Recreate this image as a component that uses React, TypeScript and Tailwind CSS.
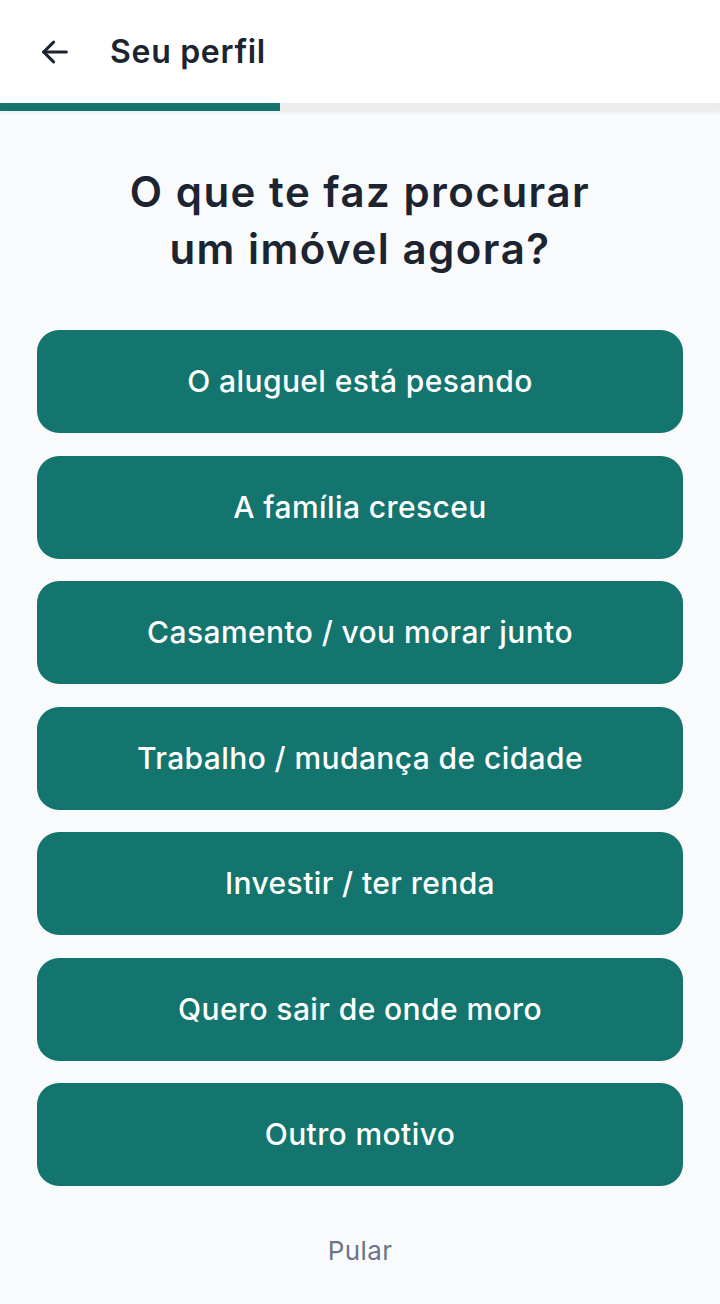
const OPTIONS = [
  'O aluguel está pesando',
  'A família cresceu',
  'Casamento / vou morar junto',
  'Trabalho / mudança de cidade',
  'Investir / ter renda',
  'Quero sair de onde moro',
  'Outro motivo',
];

export default function App() {
  return (
    <div
      className="flex min-h-[1304px] flex-col bg-[#f8fafc] text-[#1b2430]"
      style={{ fontFamily: 'Inter, "Noto Sans", sans-serif' }}
    >
      {/* Top bar */}
      <header className="flex h-[103px] items-center gap-[38px] bg-white px-[38px]">
        <svg width="34" height="34" viewBox="0 0 24 24" fill="none" stroke="#1b2430" strokeWidth="2.2" strokeLinecap="round" strokeLinejoin="round">
          <path d="M20 12H4" />
          <path d="M11 5l-7 7 7 7" />
        </svg>
        <h1 className="text-[32px] font-semibold tracking-[0.7px]">Seu perfil</h1>
      </header>

      {/* Progress */}
      <div className="h-[8px] bg-[#ececec] shadow-[0_2px_4px_rgba(0,0,0,0.06)]">
        <div className="h-full w-[280px] bg-[#13756d]" />
      </div>

      <main className="flex flex-col px-[37px] pt-[52px]">
        <h2 className="text-center text-[42px] font-semibold leading-[57px] tracking-[1.5px]">
          O que te faz procurar
          <br />
          um imóvel agora?
        </h2>

        <div className="mt-[53px] flex flex-col gap-[22.5px]">
          {OPTIONS.map((o) => (
            <button
              key={o}
              className="flex h-[103px] items-center justify-center rounded-[22px] bg-[#13756d] text-[30px] font-[450] tracking-[0.4px] text-white"
            >
              {o}
            </button>
          ))}
        </div>

        <button className="mt-[45px] self-center text-[26px] tracking-[0.4px] text-[#6b7489]">Pular</button>
      </main>
    </div>
  );
}
